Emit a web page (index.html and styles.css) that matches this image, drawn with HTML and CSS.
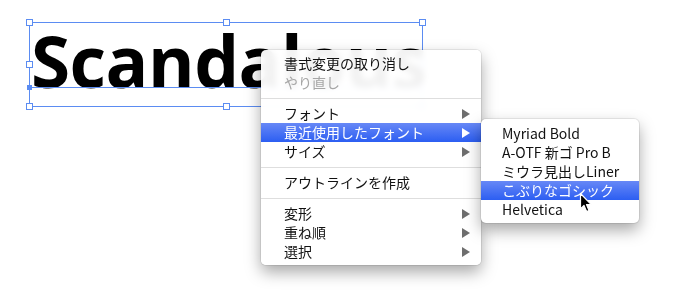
FILE: index.html
```html
<!DOCTYPE html>
<html lang="ja">
<head>
    <meta charset="UTF-8">
    <title>Scandalous</title>
    <link rel="stylesheet" href="styles.css">
</head>
<body>
    <div class="canvas">
        <div class="text-frame">
            <div class="word">Scandalous</div>
            <span class="handle tl"></span>
            <span class="handle tm"></span>
            <span class="handle tr"></span>
            <span class="handle ml"></span>
            <span class="handle mr"></span>
            <span class="handle bl"></span>
            <span class="handle bm"></span>
            <span class="handle br"></span>
            <div class="baseline"></div>
            <span class="base-dot"></span>
        </div>

        <div class="menu context-menu">
            <div class="item">書式変更の取り消し</div>
            <div class="item disabled">やり直し</div>
            <div class="separator"></div>
            <div class="item has-sub">フォント</div>
            <div class="item has-sub active">最近使用したフォント</div>
            <div class="item has-sub">サイズ</div>
            <div class="separator"></div>
            <div class="item">アウトラインを作成</div>
            <div class="separator"></div>
            <div class="item has-sub">変形</div>
            <div class="item has-sub">重ね順</div>
            <div class="item has-sub">選択</div>
        </div>

        <div class="menu sub-menu">
            <div class="item">Myriad Bold</div>
            <div class="item">A-OTF 新ゴ Pro B</div>
            <div class="item">ミウラ見出しLiner</div>
            <div class="item active">こぶりなゴシック</div>
            <div class="item">Helvetica</div>
        </div>

        <svg class="cursor" width="14" height="22" viewBox="0 0 14 22">
            <path d="M1.5 1.5 L1.5 17 L5 13.5 L7.6 19.6 L10 18.6 L7.5 12.6 L12.3 12.6 Z" fill="#000" stroke="#fff" stroke-width="1.2" stroke-linejoin="round"/>
        </svg>
    </div>
</body>
</html>
```

FILE: styles.css
```css
* {
    margin: 0;
    padding: 0;
    box-sizing: border-box;
}

body {
    background-color: #fff;
    font-family: "Noto Sans CJK JP", "DejaVu Sans", sans-serif;
}

.canvas {
    position: relative;
    width: 680px;
    height: 305px;
    overflow: hidden;
}

/* text object on the artboard */
.text-frame {
    position: absolute;
    left: 29px;
    top: 22px;
    width: 394px;
    height: 85px;
    border: 1px solid #5b8cf2;
}

.word {
    font-family: "Open Sans", "Liberation Sans", sans-serif;
    font-weight: bold;
    font-size: 71px;
    line-height: 76px;
    letter-spacing: -0.5px;
    color: #000;
    padding-left: 1px;
    white-space: nowrap;
}

.handle {
    position: absolute;
    width: 7px;
    height: 7px;
    background-color: #fff;
    border: 1px solid #5b8cf2;
}

.tl { left: -4px; top: -4px; }
.tm { left: 193px; top: -4px; }
.tr { right: -4px; top: -4px; }
.ml { left: -4px; top: 38px; }
.mr { right: -4px; top: 38px; }
.bl { left: -4px; bottom: -4px; }
.bm { left: 193px; bottom: -4px; }
.br { right: -4px; bottom: -4px; }

.baseline {
    position: absolute;
    left: 0;
    right: 0;
    top: 64px;
    height: 1px;
    background-color: #5b8cf2;
}

.base-dot {
    position: absolute;
    left: -3px;
    top: 62px;
    width: 5px;
    height: 5px;
    background-color: #5b8cf2;
}

/* menus */
.menu {
    position: absolute;
    background-color: rgba(255, 255, 255, 0.95);
    backdrop-filter: blur(3px);
    border-radius: 5px;
    box-shadow: 0 0 0 1px rgba(0, 0, 0, 0.08), 0 7px 16px rgba(0, 0, 0, 0.35);
    font-size: 14px;
    color: #111;
}

.context-menu {
    left: 261px;
    top: 50px;
    width: 220px;
    padding: 4px 0;
}

.sub-menu {
    left: 481px;
    top: 119px;
    width: 158px;
    padding: 5px 0 4px;
    background-color: #fff;
}

.item {
    height: 19px;
    line-height: 19px;
    padding-left: 23px;
    padding-right: 11px;
    display: flex;
    align-items: center;
    justify-content: space-between;
    white-space: nowrap;
}

.sub-menu .item {
    padding-left: 21px;
}

.item.disabled {
    color: #a6a6a6;
}

.item.has-sub::after {
    content: "";
    width: 0;
    height: 0;
    border-top: 5px solid transparent;
    border-bottom: 5px solid transparent;
    border-left: 8px solid #6e6e6e;
}

.item.active {
    background: linear-gradient(#6788f6, #2c5ef2);
    color: #fff;
}

.item.active::after {
    border-left-color: #fff;
}

.separator {
    height: 12px;
    display: flex;
    align-items: center;
}

.separator::before {
    content: "";
    flex: 1;
    height: 1px;
    background-color: #dedede;
}

.cursor {
    position: absolute;
    left: 579px;
    top: 192px;
}
```
